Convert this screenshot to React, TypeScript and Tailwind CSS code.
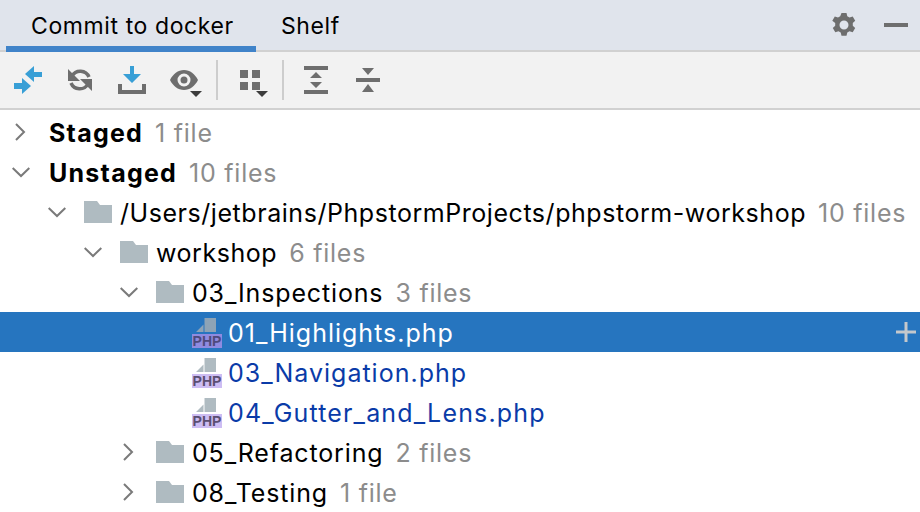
import { ReactNode } from "react";

const font = "font-['Inter',_'Liberation_Sans',_sans-serif]";

function Chevron({ open }: { open: boolean }) {
  return (
    <svg width="18" height="18" viewBox="0 0 18 18" fill="none" stroke="#7a7a7a" strokeWidth="2">
      {open ? <path d="M0.700 5 9 13l8.300-8" /> : <path d="M4 1l8 8-8 8" />}
    </svg>
  );
}

function Folder() {
  return (
    <svg width="28" height="22" viewBox="0 0 28 22" className="shrink-0 mr-[2px]">
      <path d="M0 0h13l3 4h12v18H0z" fill="#AFBBC1" />
    </svg>
  );
}

function PhpIcon({ selected }: { selected?: boolean }) {
  return (
    <div className="relative w-[30px] h-[32px] shrink-0">
      <svg width="20" height="14" viewBox="0 0 20 14" className="absolute left-[4px] top-[2px]">
        <path d="M8.500 0H20v14H8.500zM0 14l7.500-7.500V14z" fill={selected ? "#8DA3B6" : "#AFBBC1"} />
      </svg>
      <div
        className={`absolute left-0 top-[18px] w-[30px] h-[14px] flex items-center justify-center text-[14px] leading-none font-bold tracking-normal font-['Liberation_Sans',_sans-serif] ${
          selected ? "bg-[#8F8BE0] text-[#4E4A7C]" : "bg-[#CDBDF3] text-[#5B4F72]"
        }`}
      >
        PHP
      </div>
    </div>
  );
}

function Row({
  indent,
  chevron,
  icon,
  children,
  selected,
}: {
  indent: number;
  chevron?: "open" | "closed";
  icon?: ReactNode;
  children: ReactNode;
  selected?: boolean;
}) {
  return (
    <div className={`h-10 flex items-center ${selected ? "bg-[#2675BF]" : ""}`} style={{ paddingLeft: indent }}>
      <div className="w-[36px] shrink-0 flex items-center">{chevron && <Chevron open={chevron === "open"} />}</div>
      {icon && <div className="mr-[6px] flex items-center">{icon}</div>}
      <div className="flex-1 min-w-0 whitespace-nowrap flex items-baseline gap-[12px] mt-[2px]">{children}</div>
      {selected && (
        <svg width="20" height="20" viewBox="0 0 20 20" className="mr-[4px] shrink-0">
          <path d="M8.500 0h3v8.500H20v3h-8.500V20h-3v-8.500H0v-3h8.500z" fill="#C4C8CC" />
        </svg>
      )}
    </div>
  );
}

const Count = ({ children }: { children: ReactNode }) => (
  <span className="text-[#8C8C8C] tracking-[0.75px]">{children}</span>
);

export default function App() {
  return (
    <div className={`w-[920px] h-[512px] overflow-hidden bg-white text-[25px] leading-none text-black ${font}`}>
      {/* TABS */}
      <div className="h-[52px] bg-[#E0E4EC] border-b-2 border-[#D1D1D1] flex items-stretch text-[23px] tracking-[0.6px]">
        <div className="ml-[6px] w-[250px] -mb-[2px] border-b-[6px] border-[#4083C9] pl-[25px] flex items-center pt-[6px]">
          Commit to docker
        </div>
        <div className="ml-[25px] flex items-center -mb-[2px]">Shelf</div>
        <div className="ml-auto flex items-center gap-[27px] pr-[12px]">
          <svg width="26" height="26" viewBox="0 0 26 26">
            <path
              fill="#6E6E6E"
              fillRule="evenodd"
              d="M10.500 1h5l.8 3.300 2.200 1.200 3.200-1 2.500 4.300-2.400 2.300v2.600l2.400 2.300-2.500 4.300-3.200-1-2.200 1.200-.8 3.300h-5l-.8-3.300-2.200-1.200-3.200 1-2.500-4.300 2.400-2.300v-2.600L1.300 8.800l2.500-4.300 3.200 1 2.200-1.200zM13 8.500a4.500 4.500 0 1 0 0 9 4.500 4.500 0 0 0 0-9z"
            />
          </svg>
          <div className="w-6 h-1 bg-[#6E6E6E]" />
        </div>
      </div>

      {/* TOOLBAR */}
      <div className="h-[58px] bg-[#F2F2F2] border-b-2 border-[#D1D1D1] flex items-center pl-[14px]">
        <svg width="28" height="28" viewBox="0 0 28 28" className="mr-[26px]">
          <path fill="#389FD6" d="M20 0v6h8v5h-8v5l-9-8zM8 12v5H0v6h8v5l9-8z" />
        </svg>
        <svg width="24" height="24" viewBox="0 0 24 24" fill="none" className="mr-[26px]">
          <path d="M4 8A9.500 9.500 0 0 1 21 9" stroke="#6E6E6E" strokeWidth="3.500" />
          <path d="M20 16A9.500 9.500 0 0 1 3 15" stroke="#6E6E6E" strokeWidth="3.500" />
          <path d="M0 1v12h12zM24 23V11H12z" fill="#6E6E6E" />
        </svg>
        <svg width="28" height="28" viewBox="0 0 28 28" className="mr-[24px]">
          <path d="M12 0h4v8h7l-9 9-9-9h7z" fill="#389FD6" />
          <path d="M0 18h4v6h20v-6h4v10H0z" fill="#6E6E6E" />
        </svg>
        <div className="relative w-[32px] h-[34px] mr-[14px]">
          <svg width="28" height="20" viewBox="0 0 28 20" className="absolute left-0 top-[7px]">
            <path
              fill="#6E6E6E"
              fillRule="evenodd"
              d="M14 0c6 0 11 4 14 10-3 6-8 10-14 10S3 16 0 10C3 4 8 0 14 0zm0 3.500a6.500 6.500 0 1 0 0 13 6.500 6.500 0 0 0 0-13zm0 3a3.500 3.500 0 1 1 0 7 3.500 3.500 0 0 1 0-7z"
            />
          </svg>
          <div className="absolute right-0 bottom-0 w-0 h-0 border-x-[6px] border-x-transparent border-t-[6px] border-t-[#3C3C3C]" />
        </div>
        <div className="w-[2px] h-10 bg-[#CDCDCD] mr-[22px]" />
        <div className="relative w-[30px] h-[34px] mr-[12px]">
          <div className="grid grid-cols-[8px_8px] gap-[4px] mt-[7px]">
            <div className="h-[8px] bg-[#6E6E6E]" />
            <div className="h-[8px] bg-[#6E6E6E]" />
            <div className="h-[8px] bg-[#6E6E6E]" />
            <div className="h-[8px] bg-[#6E6E6E]" />
          </div>
          <div className="absolute right-[2px] bottom-0 w-0 h-0 border-x-[6px] border-x-transparent border-t-[6px] border-t-[#3C3C3C]" />
        </div>
        <div className="w-[2px] h-10 bg-[#CDCDCD] mr-[20px]" />
        <svg width="24" height="28" viewBox="0 0 24 28" className="mr-[28px]">
          <path d="M0 0h24v4H0zM0 24h24v4H0zM12 6l6 6H6zM12 22l-6-6h12z" fill="#6E6E6E" />
        </svg>
        <svg width="24" height="28" viewBox="0 0 24 28">
          <path d="M0 12h24v4H0zM12 9 6 2h12zM12 18l6 8H6z" fill="#6E6E6E" />
        </svg>
      </div>

      {/* TREE */}
      <div className="pt-[2px] tracking-[0.85px]">
        <Row indent={12} chevron="closed">
          <span className="font-bold tracking-[1.25px] ml-[1px]">Staged</span>
          <Count>1 file</Count>
        </Row>
        <Row indent={12} chevron="open">
          <span className="font-bold tracking-[1.25px] ml-[1px]">Unstaged</span>
          <Count>10 files</Count>
        </Row>
        <Row indent={48} chevron="open" icon={<Folder />}>
          <span className="tracking-[0.55px]">/Users/jetbrains/PhpstormProjects/phpstorm-workshop</span>
          <Count>10 files</Count>
        </Row>
        <Row indent={84} chevron="open" icon={<Folder />}>
          <span className="tracking-[0.55px]">workshop</span>
          <Count>6 files</Count>
        </Row>
        <Row indent={120} chevron="open" icon={<Folder />}>
          <span>03_Inspections</span>
          <Count>3 files</Count>
        </Row>
        <Row indent={156} selected icon={<PhpIcon selected />}>
          <span className="text-white tracking-[1px]">01_Highlights.php</span>
        </Row>
        <Row indent={156} icon={<PhpIcon />}>
          <span className="text-[#0A3BA8] tracking-[1px]">03_Navigation.php</span>
        </Row>
        <Row indent={156} icon={<PhpIcon />}>
          <span className="text-[#0A3BA8] tracking-[1.15px]">04_Gutter_and_Lens.php</span>
        </Row>
        <Row indent={120} chevron="closed" icon={<Folder />}>
          <span>05_Refactoring</span>
          <Count>2 files</Count>
        </Row>
        <Row indent={120} chevron="closed" icon={<Folder />}>
          <span>08_Testing</span>
          <Count>1 file</Count>
        </Row>
      </div>
    </div>
  );
}
